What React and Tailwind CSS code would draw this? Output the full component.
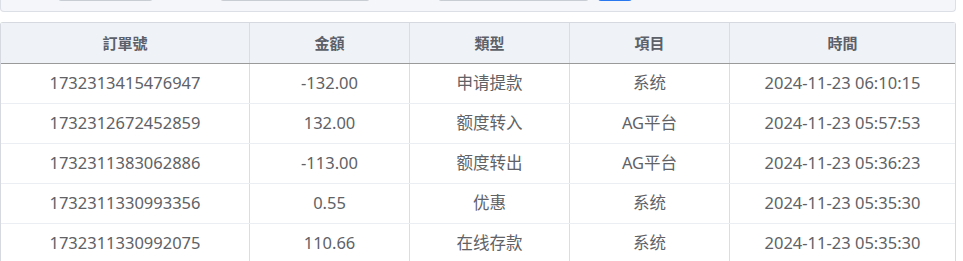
const rows = [
  { id: '1732313415476947', amount: '-132.00', type: '申请提款', item: '系统', time: '2024-11-23 06:10:15' },
  { id: '1732312672452859', amount: '132.00', type: '额度转入', item: 'AG平台', time: '2024-11-23 05:57:53' },
  { id: '1732311383062886', amount: '-113.00', type: '额度转出', item: 'AG平台', time: '2024-11-23 05:36:23' },
  { id: '1732311330993356', amount: '0.55', type: '优惠', item: '系统', time: '2024-11-23 05:35:30' },
  { id: '1732311330992075', amount: '110.66', type: '在线存款', item: '系统', time: '2024-11-23 05:35:30' },
];

const cols = ['w-[249px]', 'w-[160px]', 'w-[160px]', 'w-[160px]', 'flex-1'];

export default function App() {
  return (
    <div
      className="w-[963px] h-[261px] overflow-hidden bg-white"
      style={{ fontFamily: '"Noto Sans", "Noto Sans CJK SC", sans-serif' }}
    >
      <div className="w-[956px]">
        {/* filter panel (scrolled mostly out of view) */}
        <div className="h-[12px] overflow-hidden flex items-end pb-[10px] bg-[#f4f6f9] border border-t-0 border-[#dcdfe6] rounded-b-[4px]">
          <div className="ml-[57px] w-[95px] h-[30px] shrink-0 bg-[#eceef2] border border-[#c8ccd3] rounded-[3px]" />
          <div className="ml-[67px] w-[150px] h-[30px] shrink-0 bg-[#eceef2] border border-[#c8ccd3] rounded-[3px]" />
          <div className="ml-[68px] w-[151px] h-[30px] shrink-0 bg-[#eceef2] border border-[#c8ccd3] rounded-[3px]" />
          <div className="ml-[9px] w-[34px] h-[30px] shrink-0 bg-[#2a78f0] rounded-[3px]" />
        </div>

        <div className="mt-[10px] border border-b-0 border-[#d6dae0] rounded-t-[3px] text-[#606266]">
          <div className="flex h-[41px] bg-[#eff2f6] border-b border-[#9a9a9a] text-[15px] font-bold text-[#5c6068]">
            {['訂單號', '金額', '類型', '項目', '時間'].map((h, i) => (
              <div
                key={h}
                className={`${cols[i]} flex items-center justify-center ${i < 4 ? 'border-r border-[#efd6d3]' : ''}`}
              >
                {h}
              </div>
            ))}
          </div>
          {rows.map((r) => (
            <div key={r.id} className="flex h-[40px] border-b border-[#ebeef2] text-[16.5px]">
              {[r.id, r.amount, r.type, r.item, r.time].map((v, i) => (
                <div
                  key={i}
                  className={`${cols[i]} flex items-center justify-center ${i < 4 ? 'border-r border-[#efd6d3]' : ''}`}
                >
                  {v}
                </div>
              ))}
            </div>
          ))}
        </div>
      </div>
    </div>
  );
}
